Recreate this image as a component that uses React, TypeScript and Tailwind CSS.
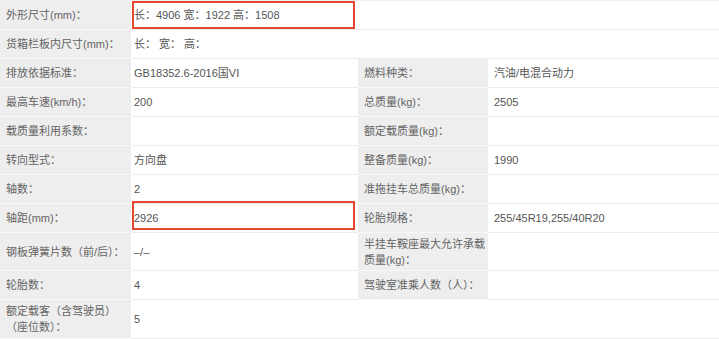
import React from 'react';

type Row = {
  label: React.ReactNode;
  value?: React.ReactNode;
  label2?: React.ReactNode;
  value2?: React.ReactNode;
  full?: boolean;
  mark?: string;
  h?: string;
};

const rows: Row[] = [
  { label: '外形尺寸(mm)：', value: '长：4906 宽：1922 高：1508', full: true, mark: 'top-0 h-[28px]' },
  { label: '货箱栏板内尺寸(mm)：', value: '长：  宽：  高：', full: true },
  { label: '排放依据标准：', value: 'GB18352.6-2016国VI', label2: '燃料种类：', value2: '汽油/电混合动力' },
  { label: '最高车速(km/h)：', value: '200', label2: '总质量(kg)：', value2: '2505' },
  { label: '载质量利用系数：', value: '', label2: '额定载质量(kg)：', value2: '' },
  { label: '转向型式：', value: '方向盘', label2: '整备质量(kg)：', value2: '1990' },
  { label: '轴数：', value: '2', label2: '准拖挂车总质量(kg)：', value2: '' },
  { label: '轴距(mm)：', value: '2926', label2: '轮胎规格：', value2: '255/45R19,255/40R20', mark: 'top-[-3px] h-[29px]' },
  {
    label: '钢板弹簧片数（前/后）：',
    value: '–/–',
    label2: (
      <>
        半挂车鞍座最大允许承载
        <br />
        质量(kg)：
      </>
    ),
    value2: '',
    h: 'h-[38px]',
  },
  { label: '轮胎数：', value: '4', label2: '驾驶室准乘人数（人）：', value2: '' },
  {
    label: (
      <>
        额定载客（含驾驶员）
        <br />
        （座位数）：
      </>
    ),
    value: '5',
    h: 'h-[39px]',
  },
  { label: '', value: '', label2: '', value2: '' },
];

const labelCls = 'bg-[#eeeeee] border-b border-[#f8f8f8] pl-[6px] whitespace-nowrap align-middle text-[#646464]';
const valueCls = 'relative bg-white border-b border-[#ececec] pl-[3px] whitespace-nowrap align-middle text-[#555555]';

function Mark({ pos }: { pos: string }) {
  return <div className={'absolute left-[1px] w-[223px] border-2 border-[#e2492f] ' + pos} />;
}

export default function App() {
  return (
    <div className="w-[719px] h-[339px] overflow-hidden bg-white font-['Liberation_Sans','Noto_Sans_CJK_SC',sans-serif] text-[11px] leading-[16px]">
      <table className="w-[719px] table-fixed border-collapse border-t border-[#f0f0f0]">
        <colgroup>
          <col className="w-[131px]" />
          <col className="w-[227px]" />
          <col className="w-[130px]" />
          <col className="w-[231px]" />
        </colgroup>
        <tbody>
          {rows.map((r, i) => (
            <tr key={i} className={r.h ?? 'h-[29px]'}>
              <td className={labelCls}>{r.label}</td>
              {r.full ? (
                <td colSpan={3} className={valueCls}>
                  {r.mark && <Mark pos={r.mark} />}
                  {r.value}
                </td>
              ) : r.label2 === undefined ? (
                <>
                  <td className={valueCls}>{r.value}</td>
                  <td colSpan={2} className={valueCls}></td>
                </>
              ) : (
                <>
                  <td className={valueCls}>
                    {r.mark && <Mark pos={r.mark} />}
                    {r.value}
                  </td>
                  <td className={labelCls}>{r.label2}</td>
                  <td className={valueCls + ' pl-[6px] border-r border-r-[#f0f0f0]'}>{r.value2}</td>
                </>
              )}
            </tr>
          ))}
        </tbody>
      </table>
    </div>
  );
}
